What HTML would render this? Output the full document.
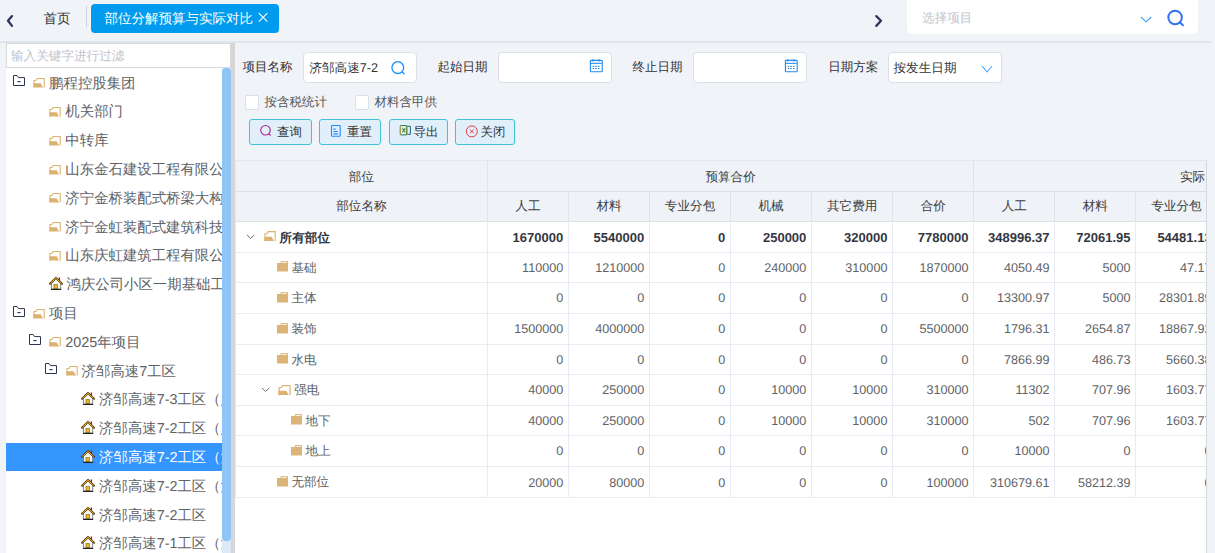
<!DOCTYPE html><html><head><meta charset="utf-8"><style>
*{box-sizing:border-box;margin:0;padding:0}
html,body{width:1215px;height:553px;overflow:hidden;background:#f0f3f8;font-family:"Liberation Sans", sans-serif;text-rendering:geometricPrecision;}
.ab{position:absolute;white-space:nowrap}
.ic{position:absolute;display:block;overflow:visible}
.t{position:absolute;white-space:nowrap;line-height:1}
</style></head><body>
<svg class="ic" style="left:0;top:0" width="20" height="32" viewBox="0 0 20 32"><path d="M12 16.1L8 20.8L12 25.9" fill="none" stroke="#2e3560" stroke-width="2.3" stroke-linecap="round" stroke-linejoin="round"/></svg>
<div class="t" style="left:43.5px;top:11.5px;font-size:13.5px;color:#333">首页</div>
<div class="ab" style="left:86px;top:6px;width:1px;height:21px;background:#cfd3d9"></div>
<div class="ab" style="left:91px;top:4px;width:188px;height:29px;background:#009bee;border-radius:4px"></div>
<div class="t" style="left:104.5px;top:12px;font-size:13.5px;color:#fff">部位分解预算与实际对比</div>
<svg class="ic" style="left:257px;top:12px" width="11" height="11" viewBox="0 0 11 11"><path d="M1.8 1.2L10.4 9.6M10.4 1.2L1.8 9.6" stroke="#fff" stroke-width="1.1"/></svg>
<svg class="ic" style="left:860px;top:0" width="30" height="32" viewBox="860 0 30 32"><path d="M876.3 16.1L881 20.8L876.3 25.9" fill="none" stroke="#2e3560" stroke-width="2.3" stroke-linecap="round" stroke-linejoin="round"/></svg>
<div class="ab" style="left:907px;top:-5px;width:291px;height:39px;background:#fff;border-radius:5px"></div>
<div class="t" style="left:922px;top:12px;font-size:12.6px;color:#c0c4cc">选择项目</div>
<svg class="ic" style="left:1139.6px;top:16.2px" width="12.2" height="6.8" viewBox="0 0 12.2 6.8"><path d="M1 1L6.1 5.8L11.2 1" fill="none" stroke="#409eff" stroke-width="1.1"/></svg>
<svg class="ic" style="left:1165px;top:8px" width="22" height="20" viewBox="0 0 22 20"><circle cx="10.1" cy="9.4" r="6.75" fill="none" stroke="#3370f6" stroke-width="2"/><path d="M14.9 14.2L17.9 17.2" stroke="#3370f6" stroke-width="2" stroke-linecap="round"/></svg>
<div class="ab" style="left:0;top:41px;width:1212px;height:2px;background:#e0e5ec"></div>
<div class="ab" style="left:6px;top:43px;width:225px;height:510px;background:#fff;overflow:hidden">
<div class="ab" style="left:0;top:0;width:225px;height:25px;border:1px solid #d9d9d9"></div>
<div class="t" style="left:5px;top:7px;font-size:12.6px;color:#c0c4cc">输入关键字进行过滤</div>
<svg class="ic" style="left:5.5px;top:31.199999999999996px" width="14" height="13" viewBox="0 0 14 13"><path d="M1.5 1.5H5.1L6.4 3.6H12.5V11.5H1.5Z" fill="none" stroke="#2d3450" stroke-width="1"/><path d="M5.3 7.6H8.6" stroke="#2d3450" stroke-width="1.1"/></svg>
<svg class="ic" style="left:27.1px;top:35.199999999999996px" width="12" height="10.00" viewBox="0 0 12 10" preserveAspectRatio="none"><path d="M1 9.5V2.55H2.9L4.1 0.55H11.2V9.5" fill="none" stroke="#dcb271" stroke-width="1.1"/><path d="M0.4 5.35H7.7L10 9.4H0.4Z" fill="#dcb271"/></svg>
<div class="t" style="left:43.10px;top:33.60px;font-size:14.4px;color:#606266">鹏程控股集团</div>
<svg class="ic" style="left:43.35px;top:63.99999999999999px" width="12" height="10.00" viewBox="0 0 12 10" preserveAspectRatio="none"><path d="M1 9.5V2.55H2.9L4.1 0.55H11.2V9.5" fill="none" stroke="#dcb271" stroke-width="1.1"/><path d="M0.4 5.35H7.7L10 9.4H0.4Z" fill="#dcb271"/></svg>
<div class="t" style="left:59.35px;top:62.40px;font-size:14.4px;color:#606266">机关部门</div>
<svg class="ic" style="left:43.35px;top:92.79999999999998px" width="12" height="10.00" viewBox="0 0 12 10" preserveAspectRatio="none"><path d="M1 9.5V2.55H2.9L4.1 0.55H11.2V9.5" fill="none" stroke="#dcb271" stroke-width="1.1"/><path d="M0.4 5.35H7.7L10 9.4H0.4Z" fill="#dcb271"/></svg>
<div class="t" style="left:59.35px;top:91.20px;font-size:14.4px;color:#606266">中转库</div>
<svg class="ic" style="left:43.35px;top:121.6px" width="12" height="10.00" viewBox="0 0 12 10" preserveAspectRatio="none"><path d="M1 9.5V2.55H2.9L4.1 0.55H11.2V9.5" fill="none" stroke="#dcb271" stroke-width="1.1"/><path d="M0.4 5.35H7.7L10 9.4H0.4Z" fill="#dcb271"/></svg>
<div class="t" style="left:59.35px;top:120.00px;font-size:14.4px;color:#606266">山东金石建设工程有限公司</div>
<svg class="ic" style="left:43.35px;top:150.4px" width="12" height="10.00" viewBox="0 0 12 10" preserveAspectRatio="none"><path d="M1 9.5V2.55H2.9L4.1 0.55H11.2V9.5" fill="none" stroke="#dcb271" stroke-width="1.1"/><path d="M0.4 5.35H7.7L10 9.4H0.4Z" fill="#dcb271"/></svg>
<div class="t" style="left:59.35px;top:148.80px;font-size:14.4px;color:#606266">济宁金桥装配式桥梁大构件</div>
<svg class="ic" style="left:43.35px;top:179.2px" width="12" height="10.00" viewBox="0 0 12 10" preserveAspectRatio="none"><path d="M1 9.5V2.55H2.9L4.1 0.55H11.2V9.5" fill="none" stroke="#dcb271" stroke-width="1.1"/><path d="M0.4 5.35H7.7L10 9.4H0.4Z" fill="#dcb271"/></svg>
<div class="t" style="left:59.35px;top:177.60px;font-size:14.4px;color:#606266">济宁金虹装配式建筑科技有限</div>
<svg class="ic" style="left:43.35px;top:208.0px" width="12" height="10.00" viewBox="0 0 12 10" preserveAspectRatio="none"><path d="M1 9.5V2.55H2.9L4.1 0.55H11.2V9.5" fill="none" stroke="#dcb271" stroke-width="1.1"/><path d="M0.4 5.35H7.7L10 9.4H0.4Z" fill="#dcb271"/></svg>
<div class="t" style="left:59.35px;top:206.40px;font-size:14.4px;color:#606266">山东庆虹建筑工程有限公司</div>
<svg class="ic" style="left:42.5px;top:234.0px" width="15" height="14" viewBox="0 0 15 14"><g transform="translate(0.4 0.3)"><rect x="9.3" y="0.2" width="1.4" height="3.4" fill="#c0140c"/><path d="M2 6.2L6.6 1.6L11.3 6.2V11.6H2Z" fill="#fafafa"/><path d="M2 6V11.6M11.3 6V11.6" stroke="#555" stroke-width="0.7"/><path d="M0.7 6.4L6.6 0.8L12.6 6.4" fill="none" stroke="#4a3406" stroke-width="2" stroke-linejoin="round" stroke-linecap="round"/><path d="M0.9 6.2L6.6 0.9L12.4 6.2" fill="none" stroke="#f0b020" stroke-width="1"/><rect x="4.6" y="7.4" width="3.4" height="4.2" fill="#eab52a" stroke="#7a5a10" stroke-width="0.6"/><rect x="1.6" y="11.4" width="10.2" height="1.3" fill="#222"/></g></svg>
<div class="t" style="left:60.50px;top:235.20px;font-size:14.4px;color:#606266">鸿庆公司小区一期基础工程</div>
<svg class="ic" style="left:5.5px;top:261.6px" width="14" height="13" viewBox="0 0 14 13"><path d="M1.5 1.5H5.1L6.4 3.6H12.5V11.5H1.5Z" fill="none" stroke="#2d3450" stroke-width="1"/><path d="M5.3 7.6H8.6" stroke="#2d3450" stroke-width="1.1"/></svg>
<svg class="ic" style="left:27.1px;top:265.6px" width="12" height="10.00" viewBox="0 0 12 10" preserveAspectRatio="none"><path d="M1 9.5V2.55H2.9L4.1 0.55H11.2V9.5" fill="none" stroke="#dcb271" stroke-width="1.1"/><path d="M0.4 5.35H7.7L10 9.4H0.4Z" fill="#dcb271"/></svg>
<div class="t" style="left:43.10px;top:264.00px;font-size:14.4px;color:#606266">项目</div>
<svg class="ic" style="left:21.75px;top:290.4px" width="14" height="13" viewBox="0 0 14 13"><path d="M1.5 1.5H5.1L6.4 3.6H12.5V11.5H1.5Z" fill="none" stroke="#2d3450" stroke-width="1"/><path d="M5.3 7.6H8.6" stroke="#2d3450" stroke-width="1.1"/></svg>
<svg class="ic" style="left:43.35px;top:294.4px" width="12" height="10.00" viewBox="0 0 12 10" preserveAspectRatio="none"><path d="M1 9.5V2.55H2.9L4.1 0.55H11.2V9.5" fill="none" stroke="#dcb271" stroke-width="1.1"/><path d="M0.4 5.35H7.7L10 9.4H0.4Z" fill="#dcb271"/></svg>
<div class="t" style="left:59.35px;top:292.80px;font-size:14.4px;color:#606266">2025年项目</div>
<svg class="ic" style="left:38.0px;top:319.20000000000005px" width="14" height="13" viewBox="0 0 14 13"><path d="M1.5 1.5H5.1L6.4 3.6H12.5V11.5H1.5Z" fill="none" stroke="#2d3450" stroke-width="1"/><path d="M5.3 7.6H8.6" stroke="#2d3450" stroke-width="1.1"/></svg>
<svg class="ic" style="left:59.599999999999994px;top:323.20000000000005px" width="12" height="10.00" viewBox="0 0 12 10" preserveAspectRatio="none"><path d="M1 9.5V2.55H2.9L4.1 0.55H11.2V9.5" fill="none" stroke="#dcb271" stroke-width="1.1"/><path d="M0.4 5.35H7.7L10 9.4H0.4Z" fill="#dcb271"/></svg>
<div class="t" style="left:75.60px;top:321.60px;font-size:14.4px;color:#606266">济邹高速7工区</div>
<svg class="ic" style="left:75.0px;top:349.2px" width="15" height="14" viewBox="0 0 15 14"><g transform="translate(0.4 0.3)"><rect x="9.3" y="0.2" width="1.4" height="3.4" fill="#c0140c"/><path d="M2 6.2L6.6 1.6L11.3 6.2V11.6H2Z" fill="#fafafa"/><path d="M2 6V11.6M11.3 6V11.6" stroke="#555" stroke-width="0.7"/><path d="M0.7 6.4L6.6 0.8L12.6 6.4" fill="none" stroke="#4a3406" stroke-width="2" stroke-linejoin="round" stroke-linecap="round"/><path d="M0.9 6.2L6.6 0.9L12.4 6.2" fill="none" stroke="#f0b020" stroke-width="1"/><rect x="4.6" y="7.4" width="3.4" height="4.2" fill="#eab52a" stroke="#7a5a10" stroke-width="0.6"/><rect x="1.6" y="11.4" width="10.2" height="1.3" fill="#222"/></g></svg>
<div class="t" style="left:93.10px;top:350.40px;font-size:14.4px;color:#606266">济邹高速7-3工区（人</div>
<svg class="ic" style="left:75.0px;top:378.00000000000006px" width="15" height="14" viewBox="0 0 15 14"><g transform="translate(0.4 0.3)"><rect x="9.3" y="0.2" width="1.4" height="3.4" fill="#c0140c"/><path d="M2 6.2L6.6 1.6L11.3 6.2V11.6H2Z" fill="#fafafa"/><path d="M2 6V11.6M11.3 6V11.6" stroke="#555" stroke-width="0.7"/><path d="M0.7 6.4L6.6 0.8L12.6 6.4" fill="none" stroke="#4a3406" stroke-width="2" stroke-linejoin="round" stroke-linecap="round"/><path d="M0.9 6.2L6.6 0.9L12.4 6.2" fill="none" stroke="#f0b020" stroke-width="1"/><rect x="4.6" y="7.4" width="3.4" height="4.2" fill="#eab52a" stroke="#7a5a10" stroke-width="0.6"/><rect x="1.6" y="11.4" width="10.2" height="1.3" fill="#222"/></g></svg>
<div class="t" style="left:93.10px;top:379.20px;font-size:14.4px;color:#606266">济邹高速7-2工区（人</div>
<div class="ab" style="left:0;top:399.80px;width:225px;height:28px;background:#3696ff"></div>
<svg class="ic" style="left:75.0px;top:406.8px" width="15" height="14" viewBox="0 0 15 14"><g transform="translate(0.4 0.3)"><rect x="9.3" y="0.2" width="1.4" height="3.4" fill="#c0140c"/><path d="M2 6.2L6.6 1.6L11.3 6.2V11.6H2Z" fill="#fafafa"/><path d="M2 6V11.6M11.3 6V11.6" stroke="#555" stroke-width="0.7"/><path d="M0.7 6.4L6.6 0.8L12.6 6.4" fill="none" stroke="#4a3406" stroke-width="2" stroke-linejoin="round" stroke-linecap="round"/><path d="M0.9 6.2L6.6 0.9L12.4 6.2" fill="none" stroke="#f0b020" stroke-width="1"/><rect x="4.6" y="7.4" width="3.4" height="4.2" fill="#eab52a" stroke="#7a5a10" stroke-width="0.6"/><rect x="1.6" y="11.4" width="10.2" height="1.3" fill="#222"/></g></svg>
<div class="t" style="left:93.10px;top:408.00px;font-size:14.4px;color:#fff">济邹高速7-2工区（济</div>
<svg class="ic" style="left:75.0px;top:435.59999999999997px" width="15" height="14" viewBox="0 0 15 14"><g transform="translate(0.4 0.3)"><rect x="9.3" y="0.2" width="1.4" height="3.4" fill="#c0140c"/><path d="M2 6.2L6.6 1.6L11.3 6.2V11.6H2Z" fill="#fafafa"/><path d="M2 6V11.6M11.3 6V11.6" stroke="#555" stroke-width="0.7"/><path d="M0.7 6.4L6.6 0.8L12.6 6.4" fill="none" stroke="#4a3406" stroke-width="2" stroke-linejoin="round" stroke-linecap="round"/><path d="M0.9 6.2L6.6 0.9L12.4 6.2" fill="none" stroke="#f0b020" stroke-width="1"/><rect x="4.6" y="7.4" width="3.4" height="4.2" fill="#eab52a" stroke="#7a5a10" stroke-width="0.6"/><rect x="1.6" y="11.4" width="10.2" height="1.3" fill="#222"/></g></svg>
<div class="t" style="left:93.10px;top:436.80px;font-size:14.4px;color:#606266">济邹高速7-2工区（济</div>
<svg class="ic" style="left:75.0px;top:464.40000000000003px" width="15" height="14" viewBox="0 0 15 14"><g transform="translate(0.4 0.3)"><rect x="9.3" y="0.2" width="1.4" height="3.4" fill="#c0140c"/><path d="M2 6.2L6.6 1.6L11.3 6.2V11.6H2Z" fill="#fafafa"/><path d="M2 6V11.6M11.3 6V11.6" stroke="#555" stroke-width="0.7"/><path d="M0.7 6.4L6.6 0.8L12.6 6.4" fill="none" stroke="#4a3406" stroke-width="2" stroke-linejoin="round" stroke-linecap="round"/><path d="M0.9 6.2L6.6 0.9L12.4 6.2" fill="none" stroke="#f0b020" stroke-width="1"/><rect x="4.6" y="7.4" width="3.4" height="4.2" fill="#eab52a" stroke="#7a5a10" stroke-width="0.6"/><rect x="1.6" y="11.4" width="10.2" height="1.3" fill="#222"/></g></svg>
<div class="t" style="left:93.10px;top:465.60px;font-size:14.4px;color:#606266">济邹高速7-2工区</div>
<svg class="ic" style="left:75.0px;top:493.2px" width="15" height="14" viewBox="0 0 15 14"><g transform="translate(0.4 0.3)"><rect x="9.3" y="0.2" width="1.4" height="3.4" fill="#c0140c"/><path d="M2 6.2L6.6 1.6L11.3 6.2V11.6H2Z" fill="#fafafa"/><path d="M2 6V11.6M11.3 6V11.6" stroke="#555" stroke-width="0.7"/><path d="M0.7 6.4L6.6 0.8L12.6 6.4" fill="none" stroke="#4a3406" stroke-width="2" stroke-linejoin="round" stroke-linecap="round"/><path d="M0.9 6.2L6.6 0.9L12.4 6.2" fill="none" stroke="#f0b020" stroke-width="1"/><rect x="4.6" y="7.4" width="3.4" height="4.2" fill="#eab52a" stroke="#7a5a10" stroke-width="0.6"/><rect x="1.6" y="11.4" width="10.2" height="1.3" fill="#222"/></g></svg>
<div class="t" style="left:93.10px;top:494.40px;font-size:14.4px;color:#606266">济邹高速7-1工区（济</div>
<div class="ab" style="left:216px;top:25px;width:9px;height:485px;background:#dce9f7"></div>
<div class="ab" style="left:216px;top:25px;width:9px;height:473px;background:#8cc5f6;border-radius:4px"></div>
</div>
<div class="ab" style="left:231px;top:43px;width:4px;height:510px;background:#d6d6d6"></div>
<div class="t" style="left:242.5px;top:60.9px;font-size:12.5px;color:#303133">项目名称</div>
<div class="ab" style="left:302.9px;top:52px;width:114.4px;height:30.5px;background:#fff;border:1px solid #dcdfe6;border-radius:4px"></div>
<div class="ab" style="left:309.4px;top:61.7px;width:70px;overflow:hidden;font-size:12.6px;line-height:1;color:#333">济邹高速7-2.</div>
<svg class="ic" style="left:390px;top:60px" width="17" height="17" viewBox="0 0 17 17"><circle cx="7.8" cy="7.6" r="5.9" fill="none" stroke="#1890ff" stroke-width="1.3"/><path d="M12 11.8L14.6 14.2" stroke="#1890ff" stroke-width="1.3"/></svg>
<div class="t" style="left:437.5px;top:60.9px;font-size:12.5px;color:#303133">起始日期</div>
<div class="ab" style="left:497.9px;top:52px;width:114.4px;height:30.5px;background:#fff;border:1px solid #dcdfe6;border-radius:4px"></div>
<svg class="ic" style="left:589px;top:59px" width="15" height="15" viewBox="0 0 15 15"><rect x="1.4" y="1.4" width="11.8" height="11.4" rx="0.8" fill="none" stroke="#1f8cf5" stroke-width="1.1"/><path d="M1.4 4.3H12.7" stroke="#1f8cf5" stroke-width="1.1"/><path d="M3.9 0.2V2.4M9.9 0.2V2.4" stroke="#1f8cf5" stroke-width="1.2"/><rect x="3.75" y="6.8500000000000005" width="1.5" height="1.1" fill="#1f8cf5"/><rect x="6.25" y="6.8500000000000005" width="1.5" height="1.1" fill="#1f8cf5"/><rect x="8.95" y="6.8500000000000005" width="1.5" height="1.1" fill="#1f8cf5"/><rect x="3.75" y="8.95" width="1.5" height="1.1" fill="#1f8cf5"/><rect x="6.25" y="8.95" width="1.5" height="1.1" fill="#1f8cf5"/><rect x="8.95" y="8.95" width="1.5" height="1.1" fill="#1f8cf5"/></svg>
<div class="t" style="left:632.5px;top:60.9px;font-size:12.5px;color:#303133">终止日期</div>
<div class="ab" style="left:692.9px;top:52px;width:114.4px;height:30.5px;background:#fff;border:1px solid #dcdfe6;border-radius:4px"></div>
<svg class="ic" style="left:784px;top:59px" width="15" height="15" viewBox="0 0 15 15"><rect x="1.4" y="1.4" width="11.8" height="11.4" rx="0.8" fill="none" stroke="#1f8cf5" stroke-width="1.1"/><path d="M1.4 4.3H12.7" stroke="#1f8cf5" stroke-width="1.1"/><path d="M3.9 0.2V2.4M9.9 0.2V2.4" stroke="#1f8cf5" stroke-width="1.2"/><rect x="3.75" y="6.8500000000000005" width="1.5" height="1.1" fill="#1f8cf5"/><rect x="6.25" y="6.8500000000000005" width="1.5" height="1.1" fill="#1f8cf5"/><rect x="8.95" y="6.8500000000000005" width="1.5" height="1.1" fill="#1f8cf5"/><rect x="3.75" y="8.95" width="1.5" height="1.1" fill="#1f8cf5"/><rect x="6.25" y="8.95" width="1.5" height="1.1" fill="#1f8cf5"/><rect x="8.95" y="8.95" width="1.5" height="1.1" fill="#1f8cf5"/></svg>
<div class="t" style="left:828.2px;top:60.9px;font-size:12.5px;color:#303133">日期方案</div>
<div class="ab" style="left:887.9px;top:52px;width:114.4px;height:30.5px;background:#fff;border:1px solid #dcdfe6;border-radius:4px"></div>
<div class="t" style="left:893.5px;top:61.5px;font-size:12.6px;color:#333">按发生日期</div>
<svg class="ic" style="left:981px;top:65px" width="12" height="8" viewBox="0 0 12 8"><path d="M1 1L6.0 7L11 1" fill="none" stroke="#409eff" stroke-width="1.1"/></svg>
<div class="ab" style="left:245.2px;top:95.4px;width:14.2px;height:14.2px;background:#fff;border:1px solid #dcdfe6;border-radius:2px"></div>
<div class="t" style="left:264.5px;top:96.1px;font-size:12.5px;color:#555">按含税统计</div>
<div class="ab" style="left:355.2px;top:95.4px;width:14.2px;height:14.2px;background:#fff;border:1px solid #dcdfe6;border-radius:2px"></div>
<div class="t" style="left:374.5px;top:96.1px;font-size:12.5px;color:#555">材料含甲供</div>
<div class="ab" style="left:249px;top:119px;width:63px;height:26px;background:#e1effb;border:1px solid #41c2db;border-radius:3px"></div>
<svg class="ic" style="left:259px;top:124px" width="14" height="14" viewBox="0 0 14 14"><circle cx="6.5" cy="6.3" r="4.75" fill="none" stroke="#b01e96" stroke-width="1.1"/><path d="M9.8 9.7L11.6 11.5" stroke="#b01e96" stroke-width="1.1"/></svg>
<div class="t" style="left:277px;top:125.8px;font-size:12.45px;color:#333">查询</div>
<div class="ab" style="left:319px;top:119px;width:62px;height:26px;background:#e1effb;border:1px solid #41c2db;border-radius:3px"></div>
<svg class="ic" style="left:326px;top:120px" width="20" height="22" viewBox="0 0 20 22"><rect x="5.5" y="5.5" width="8.7" height="10.7" rx="0.8" fill="none" stroke="#1a8cff" stroke-width="1.1"/><path d="M7.4 9.1H9.6M7.4 11.5H11.9M7.4 13.9H11.9" stroke="#1a8cff" stroke-width="1.1"/></svg>
<div class="t" style="left:347px;top:125.8px;font-size:12.45px;color:#333">重置</div>
<div class="ab" style="left:389px;top:119px;width:59px;height:26px;background:#e1effb;border:1px solid #41c2db;border-radius:3px"></div>
<svg class="ic" style="left:395px;top:120px" width="20" height="22" viewBox="0 0 20 22"><rect x="5.3" y="5.6" width="6.4" height="9.3" rx="0.6" fill="none" stroke="#2b7a3e" stroke-width="1"/><path d="M5.3 6.2V14.4" stroke="#c8b040" stroke-width="0.8"/><path d="M7.4 8.4L10.2 12.3M10.2 8.4L7.4 12.3" stroke="#4a7a40" stroke-width="1.1"/><path d="M12.4 6.3H15.4V14.3H12.4" fill="none" stroke="#1f6a78" stroke-width="1"/><path d="M11.9 5.2V15.2" stroke="#8a8a30" stroke-width="0.9"/></svg>
<div class="t" style="left:413.5px;top:125.8px;font-size:12.45px;color:#333">导出</div>
<div class="ab" style="left:455px;top:119px;width:60px;height:26px;background:#e1effb;border:1px solid #41c2db;border-radius:3px"></div>
<svg class="ic" style="left:465px;top:125px" width="14" height="14" viewBox="0 0 14 14"><circle cx="6.8" cy="6.4" r="5.5" fill="none" stroke="#e2383f" stroke-width="1"/><path d="M5 4.6L8.6 8.2M8.6 4.6L5 8.2" stroke="#e2383f" stroke-width="1"/></svg>
<div class="t" style="left:480.5px;top:125.8px;font-size:12.45px;color:#333">关闭</div>
<div class="ab" style="left:235px;top:160px;width:971px;height:393px;overflow:hidden">
<div class="ab" style="left:0;top:0;width:971px;height:61px;background:#eff2f7"></div>
<div class="ab" style="left:0;top:61px;width:971px;height:400px;background:#fff"></div>
<div class="ab" style="left:0;top:0;width:971px;height:1px;background:#e3e6eb"></div>
<div class="ab" style="left:0;top:31px;width:971px;height:1px;background:#dcdfe4"></div>
<div class="ab" style="left:0;top:60.5px;width:971px;height:1px;background:#dcdfe4"></div>
<div class="ab" style="left:251.90px;top:0;width:1px;height:61px;background:#e0e2e5"></div>
<div class="ab" style="left:251.90px;top:61px;width:1px;height:276px;background:#e8ebf3"></div>
<div class="ab" style="left:332.96px;top:31px;width:1px;height:30px;background:#e0e2e5"></div>
<div class="ab" style="left:332.96px;top:61px;width:1px;height:276px;background:#e8ebf3"></div>
<div class="ab" style="left:414.02px;top:31px;width:1px;height:30px;background:#e0e2e5"></div>
<div class="ab" style="left:414.02px;top:61px;width:1px;height:276px;background:#e8ebf3"></div>
<div class="ab" style="left:495.08px;top:31px;width:1px;height:30px;background:#e0e2e5"></div>
<div class="ab" style="left:495.08px;top:61px;width:1px;height:276px;background:#e8ebf3"></div>
<div class="ab" style="left:576.14px;top:31px;width:1px;height:30px;background:#e0e2e5"></div>
<div class="ab" style="left:576.14px;top:61px;width:1px;height:276px;background:#e8ebf3"></div>
<div class="ab" style="left:657.20px;top:31px;width:1px;height:30px;background:#e0e2e5"></div>
<div class="ab" style="left:657.20px;top:61px;width:1px;height:276px;background:#e8ebf3"></div>
<div class="ab" style="left:738.26px;top:0;width:1px;height:61px;background:#e0e2e5"></div>
<div class="ab" style="left:738.26px;top:61px;width:1px;height:276px;background:#e8ebf3"></div>
<div class="ab" style="left:819.32px;top:31px;width:1px;height:30px;background:#e0e2e5"></div>
<div class="ab" style="left:819.32px;top:61px;width:1px;height:276px;background:#e8ebf3"></div>
<div class="ab" style="left:900.38px;top:31px;width:1px;height:30px;background:#e0e2e5"></div>
<div class="ab" style="left:900.38px;top:61px;width:1px;height:276px;background:#e8ebf3"></div>
<div class="ab" style="left:981.44px;top:31px;width:1px;height:30px;background:#e0e2e5"></div>
<div class="ab" style="left:981.44px;top:61px;width:1px;height:276px;background:#e8ebf3"></div>
<div class="ab" style="left:0;top:91.55px;width:971px;height:1px;background:#e8ebf3"></div>
<div class="ab" style="left:0;top:121.80px;width:971px;height:1px;background:#e8ebf3"></div>
<div class="ab" style="left:0;top:153.00px;width:971px;height:1px;background:#e8ebf3"></div>
<div class="ab" style="left:0;top:183.70px;width:971px;height:1px;background:#e8ebf3"></div>
<div class="ab" style="left:0;top:213.80px;width:971px;height:1px;background:#e8ebf3"></div>
<div class="ab" style="left:0;top:245.00px;width:971px;height:1px;background:#e8ebf3"></div>
<div class="ab" style="left:0;top:274.70px;width:971px;height:1px;background:#e8ebf3"></div>
<div class="ab" style="left:0;top:305.90px;width:971px;height:1px;background:#e8ebf3"></div>
<div class="ab" style="left:0;top:337.10px;width:971px;height:1px;background:#e8ebf3"></div>
<div class="ab" style="left:0;top:0;width:1px;height:337px;background:#e8ebf3"></div>
<div class="t" style="left:-23.55px;top:10.6px;width:300px;text-align:center;font-size:12.6px;color:#3d3d3d;">部位</div>
<div class="t" style="left:345.60px;top:10.6px;width:300px;text-align:center;font-size:12.6px;color:#3d3d3d;">预算合价</div>
<div class="t" style="left:945px;top:10.6px;font-size:12.6px;color:#3d3d3d">实际</div>
<div class="t" style="left:-23.55px;top:40.2px;width:300px;text-align:center;font-size:12.6px;color:#3d3d3d;">部位名称</div>
<div class="t" style="left:142.93px;top:40.2px;width:300px;text-align:center;font-size:12.6px;color:#3d3d3d;">人工</div>
<div class="t" style="left:223.99px;top:40.2px;width:300px;text-align:center;font-size:12.6px;color:#3d3d3d;">材料</div>
<div class="t" style="left:305.05px;top:40.2px;width:300px;text-align:center;font-size:12.6px;color:#3d3d3d;">专业分包</div>
<div class="t" style="left:386.11px;top:40.2px;width:300px;text-align:center;font-size:12.6px;color:#3d3d3d;">机械</div>
<div class="t" style="left:467.17px;top:40.2px;width:300px;text-align:center;font-size:12.6px;color:#3d3d3d;">其它费用</div>
<div class="t" style="left:548.23px;top:40.2px;width:300px;text-align:center;font-size:12.6px;color:#3d3d3d;">合价</div>
<div class="t" style="left:629.29px;top:40.2px;width:300px;text-align:center;font-size:12.6px;color:#3d3d3d;">人工</div>
<div class="t" style="left:710.35px;top:40.2px;width:300px;text-align:center;font-size:12.6px;color:#3d3d3d;">材料</div>
<div class="t" style="left:791.41px;top:40.2px;width:300px;text-align:center;font-size:12.6px;color:#3d3d3d;">专业分包</div>
<svg class="ic" style="left:11.2px;top:73.775px" width="9.3" height="5.4" viewBox="0 0 9.3 5.4"><path d="M1 1L4.65 4.4L8.3 1" fill="none" stroke="#666a75" stroke-width="1"/></svg>
<svg class="ic" style="left:29.19999999999999px;top:71.475px" width="12" height="10.74" viewBox="0 0 12 10" preserveAspectRatio="none"><path d="M1 9.5V2.55H2.9L4.1 0.55H11.2V9.5" fill="none" stroke="#dcb271" stroke-width="1.1"/><path d="M0.4 5.35H7.7L10 9.4H0.4Z" fill="#dcb271"/></svg>
<div class="t" style="left:44.60px;top:71.78px;font-size:12.6px;color:#34373f;font-weight:bold;">所有部位</div>
<div class="t" style="left:128.16px;top:71.17px;width:200px;text-align:right;font-size:13px;color:#34373f;font-weight:bold;">1670000</div>
<div class="t" style="left:209.22px;top:71.17px;width:200px;text-align:right;font-size:13px;color:#34373f;font-weight:bold;">5540000</div>
<div class="t" style="left:290.28px;top:71.17px;width:200px;text-align:right;font-size:13px;color:#34373f;font-weight:bold;">0</div>
<div class="t" style="left:371.34px;top:71.17px;width:200px;text-align:right;font-size:13px;color:#34373f;font-weight:bold;">250000</div>
<div class="t" style="left:452.40px;top:71.17px;width:200px;text-align:right;font-size:13px;color:#34373f;font-weight:bold;">320000</div>
<div class="t" style="left:533.46px;top:71.17px;width:200px;text-align:right;font-size:13px;color:#34373f;font-weight:bold;">7780000</div>
<div class="t" style="left:614.52px;top:71.17px;width:200px;text-align:right;font-size:13px;color:#34373f;font-weight:bold;">348996.37</div>
<div class="t" style="left:695.58px;top:71.17px;width:200px;text-align:right;font-size:13px;color:#34373f;font-weight:bold;">72061.95</div>
<div class="t" style="left:776.64px;top:71.17px;width:200px;text-align:right;font-size:13px;color:#34373f;font-weight:bold;">54481.13</div>
<svg class="ic" style="left:42px;top:100.97500000000001px" width="12" height="11" viewBox="0 0 12 11"><path d="M0 2H3.5L4 0H11V10.5H0Z" fill="#dcb478"/><path d="M4.6 1.4H10.2" stroke="#fff" stroke-width="0.9"/></svg>
<div class="t" style="left:56.40px;top:101.58px;font-size:12.6px;color:#606266;">基础</div>
<div class="t" style="left:128.16px;top:101.68px;width:200px;text-align:right;font-size:12.6px;color:#606266;">110000</div>
<div class="t" style="left:209.22px;top:101.68px;width:200px;text-align:right;font-size:12.6px;color:#606266;">1210000</div>
<div class="t" style="left:290.28px;top:101.68px;width:200px;text-align:right;font-size:12.6px;color:#606266;">0</div>
<div class="t" style="left:371.34px;top:101.68px;width:200px;text-align:right;font-size:12.6px;color:#606266;">240000</div>
<div class="t" style="left:452.40px;top:101.68px;width:200px;text-align:right;font-size:12.6px;color:#606266;">310000</div>
<div class="t" style="left:533.46px;top:101.68px;width:200px;text-align:right;font-size:12.6px;color:#606266;">1870000</div>
<div class="t" style="left:614.52px;top:101.68px;width:200px;text-align:right;font-size:12.6px;color:#606266;">4050.49</div>
<div class="t" style="left:695.58px;top:101.68px;width:200px;text-align:right;font-size:12.6px;color:#606266;">5000</div>
<div class="t" style="left:776.64px;top:101.68px;width:200px;text-align:right;font-size:12.6px;color:#606266;">47.17</div>
<svg class="ic" style="left:42px;top:131.7px" width="12" height="11" viewBox="0 0 12 11"><path d="M0 2H3.5L4 0H11V10.5H0Z" fill="#dcb478"/><path d="M4.6 1.4H10.2" stroke="#fff" stroke-width="0.9"/></svg>
<div class="t" style="left:56.40px;top:132.30px;font-size:12.6px;color:#606266;">主体</div>
<div class="t" style="left:128.16px;top:132.40px;width:200px;text-align:right;font-size:12.6px;color:#606266;">0</div>
<div class="t" style="left:209.22px;top:132.40px;width:200px;text-align:right;font-size:12.6px;color:#606266;">0</div>
<div class="t" style="left:290.28px;top:132.40px;width:200px;text-align:right;font-size:12.6px;color:#606266;">0</div>
<div class="t" style="left:371.34px;top:132.40px;width:200px;text-align:right;font-size:12.6px;color:#606266;">0</div>
<div class="t" style="left:452.40px;top:132.40px;width:200px;text-align:right;font-size:12.6px;color:#606266;">0</div>
<div class="t" style="left:533.46px;top:132.40px;width:200px;text-align:right;font-size:12.6px;color:#606266;">0</div>
<div class="t" style="left:614.52px;top:132.40px;width:200px;text-align:right;font-size:12.6px;color:#606266;">13300.97</div>
<div class="t" style="left:695.58px;top:132.40px;width:200px;text-align:right;font-size:12.6px;color:#606266;">5000</div>
<div class="t" style="left:776.64px;top:132.40px;width:200px;text-align:right;font-size:12.6px;color:#606266;">28301.89</div>
<svg class="ic" style="left:42px;top:162.65000000000003px" width="12" height="11" viewBox="0 0 12 11"><path d="M0 2H3.5L4 0H11V10.5H0Z" fill="#dcb478"/><path d="M4.6 1.4H10.2" stroke="#fff" stroke-width="0.9"/></svg>
<div class="t" style="left:56.40px;top:163.25px;font-size:12.6px;color:#606266;">装饰</div>
<div class="t" style="left:128.16px;top:163.35px;width:200px;text-align:right;font-size:12.6px;color:#606266;">1500000</div>
<div class="t" style="left:209.22px;top:163.35px;width:200px;text-align:right;font-size:12.6px;color:#606266;">4000000</div>
<div class="t" style="left:290.28px;top:163.35px;width:200px;text-align:right;font-size:12.6px;color:#606266;">0</div>
<div class="t" style="left:371.34px;top:163.35px;width:200px;text-align:right;font-size:12.6px;color:#606266;">0</div>
<div class="t" style="left:452.40px;top:163.35px;width:200px;text-align:right;font-size:12.6px;color:#606266;">0</div>
<div class="t" style="left:533.46px;top:163.35px;width:200px;text-align:right;font-size:12.6px;color:#606266;">5500000</div>
<div class="t" style="left:614.52px;top:163.35px;width:200px;text-align:right;font-size:12.6px;color:#606266;">1796.31</div>
<div class="t" style="left:695.58px;top:163.35px;width:200px;text-align:right;font-size:12.6px;color:#606266;">2654.87</div>
<div class="t" style="left:776.64px;top:163.35px;width:200px;text-align:right;font-size:12.6px;color:#606266;">18867.92</div>
<svg class="ic" style="left:42px;top:193.05px" width="12" height="11" viewBox="0 0 12 11"><path d="M0 2H3.5L4 0H11V10.5H0Z" fill="#dcb478"/><path d="M4.6 1.4H10.2" stroke="#fff" stroke-width="0.9"/></svg>
<div class="t" style="left:56.40px;top:193.65px;font-size:12.6px;color:#606266;">水电</div>
<div class="t" style="left:128.16px;top:193.75px;width:200px;text-align:right;font-size:12.6px;color:#606266;">0</div>
<div class="t" style="left:209.22px;top:193.75px;width:200px;text-align:right;font-size:12.6px;color:#606266;">0</div>
<div class="t" style="left:290.28px;top:193.75px;width:200px;text-align:right;font-size:12.6px;color:#606266;">0</div>
<div class="t" style="left:371.34px;top:193.75px;width:200px;text-align:right;font-size:12.6px;color:#606266;">0</div>
<div class="t" style="left:452.40px;top:193.75px;width:200px;text-align:right;font-size:12.6px;color:#606266;">0</div>
<div class="t" style="left:533.46px;top:193.75px;width:200px;text-align:right;font-size:12.6px;color:#606266;">0</div>
<div class="t" style="left:614.52px;top:193.75px;width:200px;text-align:right;font-size:12.6px;color:#606266;">7866.99</div>
<div class="t" style="left:695.58px;top:193.75px;width:200px;text-align:right;font-size:12.6px;color:#606266;">486.73</div>
<div class="t" style="left:776.64px;top:193.75px;width:200px;text-align:right;font-size:12.6px;color:#606266;">5660.38</div>
<svg class="ic" style="left:26.2px;top:227.29999999999998px" width="9.3" height="5.4" viewBox="0 0 9.3 5.4"><path d="M1 1L4.65 4.4L8.3 1" fill="none" stroke="#666a75" stroke-width="1"/></svg>
<svg class="ic" style="left:43.30000000000001px;top:224.99999999999997px" width="12.9" height="10.74" viewBox="0 0 12 10" preserveAspectRatio="none"><path d="M1 9.5V2.55H2.9L4.1 0.55H11.2V9.5" fill="none" stroke="#dcb271" stroke-width="1.1"/><path d="M0.4 5.35H7.7L10 9.4H0.4Z" fill="#dcb271"/></svg>
<div class="t" style="left:59.20px;top:224.30px;font-size:12.6px;color:#606266;">强电</div>
<div class="t" style="left:128.16px;top:224.40px;width:200px;text-align:right;font-size:12.6px;color:#606266;">40000</div>
<div class="t" style="left:209.22px;top:224.40px;width:200px;text-align:right;font-size:12.6px;color:#606266;">250000</div>
<div class="t" style="left:290.28px;top:224.40px;width:200px;text-align:right;font-size:12.6px;color:#606266;">0</div>
<div class="t" style="left:371.34px;top:224.40px;width:200px;text-align:right;font-size:12.6px;color:#606266;">10000</div>
<div class="t" style="left:452.40px;top:224.40px;width:200px;text-align:right;font-size:12.6px;color:#606266;">10000</div>
<div class="t" style="left:533.46px;top:224.40px;width:200px;text-align:right;font-size:12.6px;color:#606266;">310000</div>
<div class="t" style="left:614.52px;top:224.40px;width:200px;text-align:right;font-size:12.6px;color:#606266;">11302</div>
<div class="t" style="left:695.58px;top:224.40px;width:200px;text-align:right;font-size:12.6px;color:#606266;">707.96</div>
<div class="t" style="left:776.64px;top:224.40px;width:200px;text-align:right;font-size:12.6px;color:#606266;">1603.77</div>
<svg class="ic" style="left:56px;top:254.15000000000003px" width="12" height="11" viewBox="0 0 12 11"><path d="M0 2H3.5L4 0H11V10.5H0Z" fill="#dcb478"/><path d="M4.6 1.4H10.2" stroke="#fff" stroke-width="0.9"/></svg>
<div class="t" style="left:70.40px;top:254.75px;font-size:12.6px;color:#606266;">地下</div>
<div class="t" style="left:128.16px;top:254.85px;width:200px;text-align:right;font-size:12.6px;color:#606266;">40000</div>
<div class="t" style="left:209.22px;top:254.85px;width:200px;text-align:right;font-size:12.6px;color:#606266;">250000</div>
<div class="t" style="left:290.28px;top:254.85px;width:200px;text-align:right;font-size:12.6px;color:#606266;">0</div>
<div class="t" style="left:371.34px;top:254.85px;width:200px;text-align:right;font-size:12.6px;color:#606266;">10000</div>
<div class="t" style="left:452.40px;top:254.85px;width:200px;text-align:right;font-size:12.6px;color:#606266;">10000</div>
<div class="t" style="left:533.46px;top:254.85px;width:200px;text-align:right;font-size:12.6px;color:#606266;">310000</div>
<div class="t" style="left:614.52px;top:254.85px;width:200px;text-align:right;font-size:12.6px;color:#606266;">502</div>
<div class="t" style="left:695.58px;top:254.85px;width:200px;text-align:right;font-size:12.6px;color:#606266;">707.96</div>
<div class="t" style="left:776.64px;top:254.85px;width:200px;text-align:right;font-size:12.6px;color:#606266;">1603.77</div>
<svg class="ic" style="left:56px;top:284.59999999999997px" width="12" height="11" viewBox="0 0 12 11"><path d="M0 2H3.5L4 0H11V10.5H0Z" fill="#dcb478"/><path d="M4.6 1.4H10.2" stroke="#fff" stroke-width="0.9"/></svg>
<div class="t" style="left:70.40px;top:285.20px;font-size:12.6px;color:#606266;">地上</div>
<div class="t" style="left:128.16px;top:285.30px;width:200px;text-align:right;font-size:12.6px;color:#606266;">0</div>
<div class="t" style="left:209.22px;top:285.30px;width:200px;text-align:right;font-size:12.6px;color:#606266;">0</div>
<div class="t" style="left:290.28px;top:285.30px;width:200px;text-align:right;font-size:12.6px;color:#606266;">0</div>
<div class="t" style="left:371.34px;top:285.30px;width:200px;text-align:right;font-size:12.6px;color:#606266;">0</div>
<div class="t" style="left:452.40px;top:285.30px;width:200px;text-align:right;font-size:12.6px;color:#606266;">0</div>
<div class="t" style="left:533.46px;top:285.30px;width:200px;text-align:right;font-size:12.6px;color:#606266;">0</div>
<div class="t" style="left:614.52px;top:285.30px;width:200px;text-align:right;font-size:12.6px;color:#606266;">10000</div>
<div class="t" style="left:695.58px;top:285.30px;width:200px;text-align:right;font-size:12.6px;color:#606266;">0</div>
<div class="t" style="left:776.64px;top:285.30px;width:200px;text-align:right;font-size:12.6px;color:#606266;">0</div>
<svg class="ic" style="left:42px;top:315.8px" width="12" height="11" viewBox="0 0 12 11"><path d="M0 2H3.5L4 0H11V10.5H0Z" fill="#dcb478"/><path d="M4.6 1.4H10.2" stroke="#fff" stroke-width="0.9"/></svg>
<div class="t" style="left:56.40px;top:316.40px;font-size:12.6px;color:#606266;">无部位</div>
<div class="t" style="left:128.16px;top:316.50px;width:200px;text-align:right;font-size:12.6px;color:#606266;">20000</div>
<div class="t" style="left:209.22px;top:316.50px;width:200px;text-align:right;font-size:12.6px;color:#606266;">80000</div>
<div class="t" style="left:290.28px;top:316.50px;width:200px;text-align:right;font-size:12.6px;color:#606266;">0</div>
<div class="t" style="left:371.34px;top:316.50px;width:200px;text-align:right;font-size:12.6px;color:#606266;">0</div>
<div class="t" style="left:452.40px;top:316.50px;width:200px;text-align:right;font-size:12.6px;color:#606266;">0</div>
<div class="t" style="left:533.46px;top:316.50px;width:200px;text-align:right;font-size:12.6px;color:#606266;">100000</div>
<div class="t" style="left:614.52px;top:316.50px;width:200px;text-align:right;font-size:12.6px;color:#606266;">310679.61</div>
<div class="t" style="left:695.58px;top:316.50px;width:200px;text-align:right;font-size:12.6px;color:#606266;">58212.39</div>
<div class="t" style="left:776.64px;top:316.50px;width:200px;text-align:right;font-size:12.6px;color:#606266;">0</div>
</div>
<div class="ab" style="left:1205.6px;top:160px;width:1px;height:393px;background:#d4d7dd"></div>
</body></html>
